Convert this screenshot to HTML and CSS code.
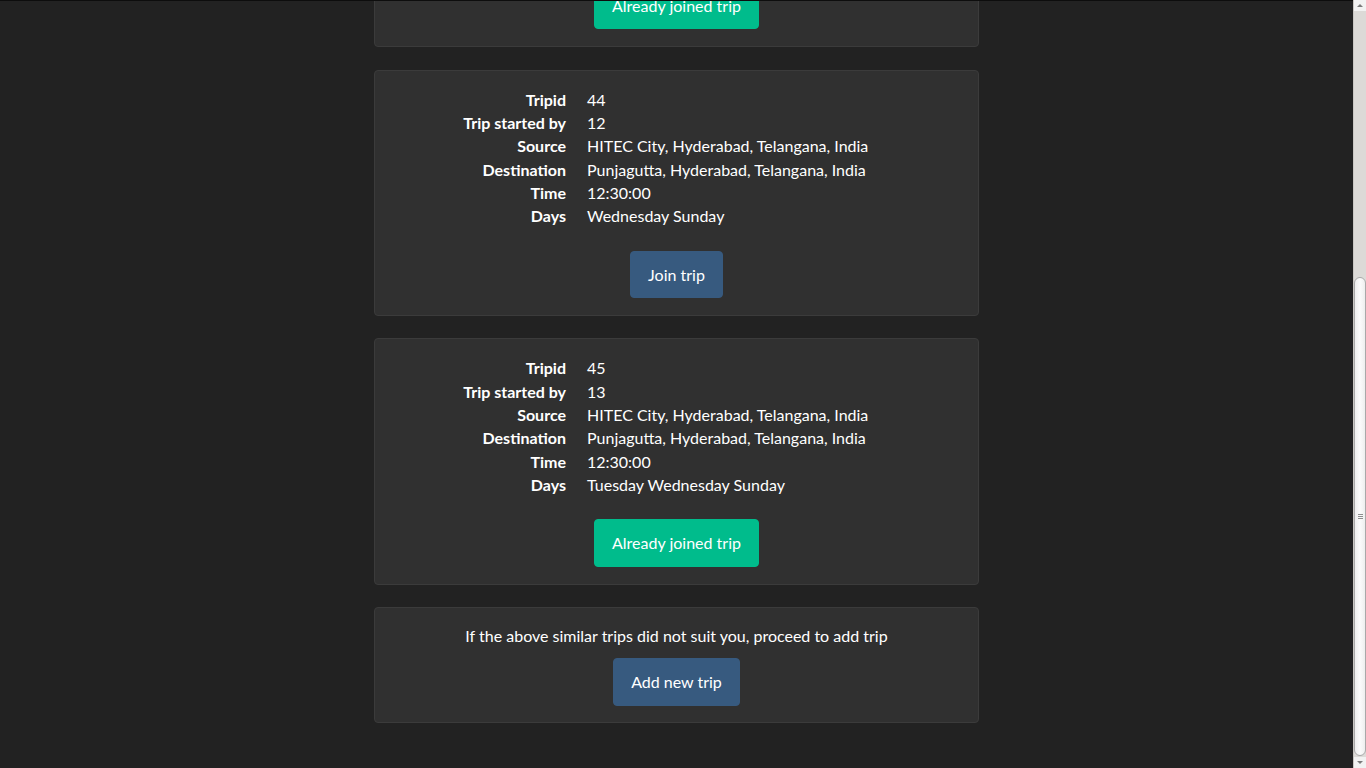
FILE: index.html
```html
<!DOCTYPE html>
<html lang="en">
<head>
<meta charset="utf-8">
<title>Similar trips</title>
<link rel="stylesheet" href="styles.css">
</head>
<body>
<main class="page">
  <div class="trips">
    <section class="well">
      <dl class="details">
        <dt>Tripid</dt><dd>43</dd>
        <dt>Trip started by</dt><dd>11</dd>
        <dt>Source</dt><dd>HITEC City, Hyderabad, Telangana, India</dd>
        <dt>Destination</dt><dd>Punjagutta, Hyderabad, Telangana, India</dd>
        <dt>Time</dt><dd>12:30:00</dd>
        <dt>Days</dt><dd>Monday Wednesday</dd>
      </dl>
      <div class="actions"><button class="btn btn-success">Already joined trip</button></div>
    </section>
    <section class="well">
      <dl class="details">
        <dt>Tripid</dt><dd>44</dd>
        <dt>Trip started by</dt><dd>12</dd>
        <dt>Source</dt><dd>HITEC City, Hyderabad, Telangana, India</dd>
        <dt>Destination</dt><dd>Punjagutta, Hyderabad, Telangana, India</dd>
        <dt>Time</dt><dd>12:30:00</dd>
        <dt>Days</dt><dd>Wednesday Sunday</dd>
      </dl>
      <div class="actions"><button class="btn btn-primary">Join trip</button></div>
    </section>
    <section class="well">
      <dl class="details">
        <dt>Tripid</dt><dd>45</dd>
        <dt>Trip started by</dt><dd>13</dd>
        <dt>Source</dt><dd>HITEC City, Hyderabad, Telangana, India</dd>
        <dt>Destination</dt><dd>Punjagutta, Hyderabad, Telangana, India</dd>
        <dt>Time</dt><dd>12:30:00</dd>
        <dt>Days</dt><dd>Tuesday Wednesday Sunday</dd>
      </dl>
      <div class="actions"><button class="btn btn-success">Already joined trip</button></div>
    </section>
    <section class="well well-add">
      <p class="note">If the above similar trips did not suit you, proceed to add trip</p>
      <div class="actions"><button class="btn btn-primary">Add new trip</button></div>
    </section>
  </div>
</main>
<div class="scrollbar">
  <div class="sb-arrow sb-up"></div>
  <div class="sb-track">
    <div class="sb-space"></div>
    <div class="sb-thumb"><span class="sb-grip"></span></div>
  </div>
  <div class="sb-arrow sb-down"></div>
</div>
</body>
</html>
```

FILE: styles.css
```css
html, body {
  margin: 0;
  padding: 0;
  height: 100%;
  overflow: hidden;
}

body {
  display: flex;
  background: #222222;
  color: #ffffff;
  font-family: Lato, "Open Sans", "Liberation Sans", sans-serif;
  font-size: 16px;
  line-height: 23.35px;
}

.page {
  flex: 1;
  min-width: 0;
  height: 100%;
  overflow: hidden;
  border-top: 1px solid #0d0d0d;
  box-sizing: border-box;
}

.trips {
  width: 605px;
  margin: -200px auto 0;
}

.well {
  background: #303030;
  border: 1px solid #3b3b3b;
  border-radius: 4px;
  padding: 17px;
  margin-bottom: 22.3px;
  box-sizing: border-box;
}

.well-add {
  padding: 16px 17px;
}

.details {
  display: grid;
  grid-template-columns: 174px 1fr;
  column-gap: 21px;
  margin: 0 0 23px;
}

.details dt {
  font-weight: 700;
  text-align: right;
  white-space: nowrap;
}

.details dd {
  margin: 0;
}

.note {
  margin: 0 0 11px;
  text-align: center;
}

.actions {
  display: flex;
  justify-content: center;
}

.btn {
  font-family: inherit;
  font-size: 16px;
  line-height: 23.35px;
  padding: 11px 17.5px;
  border: 1px solid transparent;
  border-radius: 4px;
  color: #ffffff;
  cursor: pointer;
}

.btn-primary {
  background: #375a7f;
  border-color: #375a7f;
}

.btn-success {
  background: #00bc8c;
  border-color: #00bc8c;
}

/* fake browser scrollbar */
.scrollbar {
  width: 13px;
  flex: none;
  height: 100%;
  display: flex;
  flex-direction: column;
  background: #dddbd8;
  border-left: 1px solid #c9c7c3;
  box-sizing: border-box;
}

.sb-arrow {
  height: 11px;
  flex: none;
  display: flex;
  align-items: center;
  justify-content: center;
  background: #f2f2f2;
}

.sb-up::before,
.sb-down::before {
  content: "";
  width: 0;
  height: 0;
  border-left: 3px solid transparent;
  border-right: 3px solid transparent;
}

.sb-up::before {
  border-bottom: 3px solid #7a7a7a;
}

.sb-down::before {
  border-top: 3px solid #7a7a7a;
}

.sb-track {
  flex: 1;
  display: flex;
  flex-direction: column;
}

.sb-space {
  height: 266px;
  flex: none;
  border-radius: 0 0 5px 5px;
  background: #dcdad7;
}

.sb-thumb {
  flex: 1;
  margin-bottom: 1px;
  background: linear-gradient(to right, #eeeeee, #fbfbfb 50%, #eeeeee);
  border: 1px solid #a9a9a9;
  border-radius: 6px;
  display: flex;
  align-items: center;
  justify-content: center;
}

.sb-grip {
  width: 5px;
  height: 5px;
  background: repeating-linear-gradient(to bottom, #8d8d8d 0 1px, transparent 1px 2px);
}
```
